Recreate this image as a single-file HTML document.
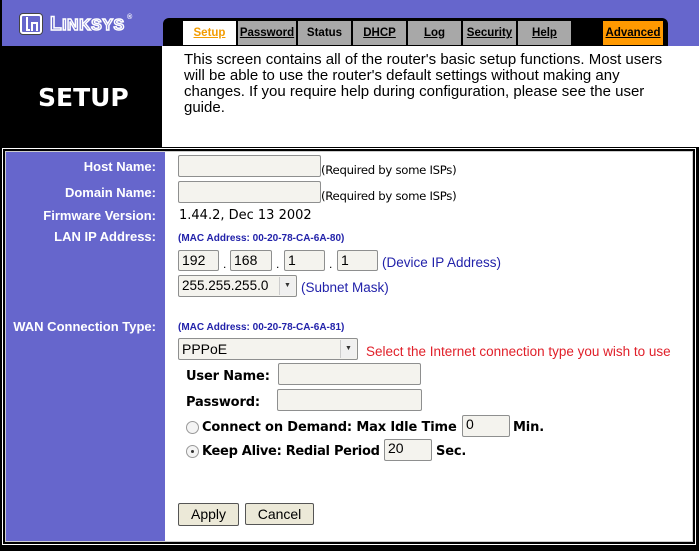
<!DOCTYPE html>
<html><head><style>
*{margin:0;padding:0;box-sizing:border-box}
body{width:699px;height:551px;background:#000;position:relative;overflow:hidden;font-family:"Liberation Sans",Arial,sans-serif}
.a{position:absolute}
.top{left:2px;top:0;width:697px;height:46px;background:#6666cc}
.tabbar{left:163px;top:18px;width:505px;height:30px;background:#000;border-radius:6px 6px 0 0}
.tab{position:absolute;top:21px;height:24px;background:#a8a8a8;font:bold 11.5px "Liberation Sans",Tahoma,sans-serif;color:#000;text-align:center;line-height:24px;text-decoration:underline}
.desc{left:162px;top:46px;width:537px;height:101px;background:#fff;font:15px "Liberation Sans",Tahoma,sans-serif;color:#000;padding:6px 0 0 22px;line-height:16px;white-space:nowrap}
.frame{left:2px;top:148px;width:694px;height:397px;border:1px solid #fff}
.inner{left:5px;top:151px;width:688px;height:391px;background:#fff;border:1px solid #ccc}
.left{left:6px;top:152px;width:159px;height:389px;background:#6666cc}
.lbl{position:absolute;right:543px;font:bold 13px "Liberation Sans",Arial,sans-serif;color:#fff;white-space:nowrap}
.inp{position:absolute;background:#f4f3ee;border:1px solid #8e8f8f;border-radius:2px;font:14px "Liberation Sans",Arial,sans-serif;padding:1px 3px}
.sm{font:11.7px "DejaVu Sans",Verdana,sans-serif;color:#000;letter-spacing:-0.3px}
.blue{color:#2222aa}
.b{font:bold 13px "DejaVu Sans",Verdana,sans-serif;color:#000;position:absolute;white-space:nowrap;letter-spacing:-0.15px}
.btn{position:absolute;background:#ece9d8;border:1px solid #555;border-radius:2px;font:14px "Liberation Sans",Arial,sans-serif;text-align:center;line-height:20px}
.dd{position:absolute;right:1px;top:1px;bottom:1px;width:16px;background:#f0f0f0;border-left:1px solid #ccc;font-size:7px;text-align:center;line-height:18px;color:#333}
.radio{position:absolute;width:13px;height:13px;border:1px solid #999;border-radius:50%;background:#f4f4f4}
</style></head><body>
<div class="a top"></div>
<div class="a" style="left:20px;top:14px;width:22px;height:20px;border:2px solid #fff;border-radius:3px;box-shadow:0 0 0 1px #444"></div>
<div class="a" style="left:26px;top:17px;width:4px;height:14px;border-left:2px solid #fff;border-bottom:2px solid #fff"></div>
<div class="a" style="left:31px;top:22px;width:7px;height:9px;border:2px solid #fff;border-bottom:none"></div>
<div class="a" style="left:50px;top:14px;font:bold 19px 'Liberation Sans',sans-serif;color:#6666cc;-webkit-text-stroke:1.5px #fff;letter-spacing:0.5px">L<span style="font-size:16px">INKSYS</span><span style="font-size:7px;vertical-align:top;-webkit-text-stroke:0;color:#fff"> ®</span></div>
<div class="a tabbar"></div>
<div class="tab" style="left:183px;width:53px;background:#fff;color:#f39c00">Setup</div>
<div class="tab" style="left:238px;width:58px">Password</div>
<div class="tab" style="left:298px;width:53px;text-decoration:none">Status</div>
<div class="tab" style="left:353px;width:53px">DHCP</div>
<div class="tab" style="left:408px;width:53px">Log</div>
<div class="tab" style="left:463px;width:53px">Security</div>
<div class="tab" style="left:518px;width:53px">Help</div>
<div class="tab" style="left:603px;width:60px;background:#ff9900">Advanced</div>
<div class="a" style="left:38px;top:83px;font:bold 25px 'DejaVu Sans',sans-serif;color:#fff">SETUP</div>
<div class="a desc">This screen contains all of the router's basic setup functions. Most users<br>will be able to use the router's default settings without making any<br>changes. If you require help during configuration, please see the user<br>guide.</div>
<div class="a frame"></div>
<div class="a inner"></div>
<div class="a left"></div>
<div class="lbl" style="top:159px">Host Name:</div>
<div class="lbl" style="top:185px">Domain Name:</div>
<div class="lbl" style="top:208px">Firmware Version:</div>
<div class="lbl" style="top:229px">LAN IP Address:</div>
<div class="lbl" style="top:319px">WAN Connection Type:</div>

<div class="inp" style="left:178px;top:155px;width:143px;height:22px"></div>
<div class="a sm" style="left:321px;top:163px">(Required by some ISPs)</div>
<div class="inp" style="left:178px;top:181px;width:143px;height:22px"></div>
<div class="a sm" style="left:321px;top:189px">(Required by some ISPs)</div>
<div class="a" style="left:179px;top:208px;font:13px 'DejaVu Sans',sans-serif">1.44.2, Dec 13 2002</div>
<div class="a blue" style="left:178px;top:233px;font:bold 10px 'Liberation Sans',sans-serif">(MAC Address: 00-20-78-CA-6A-80)</div>
<div class="inp" style="left:178px;top:250px;width:41px;height:21px">192</div>
<div class="a" style="left:223px;top:257px;font:12px sans-serif">.</div>
<div class="inp" style="left:230px;top:250px;width:42px;height:21px">168</div>
<div class="a" style="left:276px;top:257px;font:12px sans-serif">.</div>
<div class="inp" style="left:284px;top:250px;width:41px;height:21px">1</div>
<div class="a" style="left:329px;top:257px;font:12px sans-serif">.</div>
<div class="inp" style="left:337px;top:250px;width:41px;height:21px">1</div>
<div class="a blue" style="left:382px;top:255px;font:13.5px 'Liberation Sans',sans-serif">(Device IP Address)</div>
<div class="inp" style="left:178px;top:275px;width:119px;height:22px;padding-top:2px;font-size:13.5px">255.255.255.0<div class="dd">▼</div></div>
<div class="a blue" style="left:301px;top:280px;font:13.5px 'Liberation Sans',sans-serif">(Subnet Mask)</div>

<div class="a blue" style="left:178px;top:322px;font:bold 10px 'Liberation Sans',sans-serif">(MAC Address: 00-20-78-CA-6A-81)</div>
<div class="inp" style="left:178px;top:338px;width:180px;height:22px;padding-top:2px">PPPoE<div class="dd">▼</div></div>
<div class="a" style="left:366px;top:344px;font:13.5px 'Liberation Sans',sans-serif;color:#e0202a">Select the Internet connection type you wish to use</div>
<div class="b" style="left:186px;top:369px">User Name:</div>
<div class="inp" style="left:278px;top:363px;width:143px;height:22px"></div>
<div class="b" style="left:186px;top:395px">Password:</div>
<div class="inp" style="left:277px;top:389px;width:145px;height:22px"></div>
<div class="radio" style="left:186px;top:421px"></div>
<div class="b" style="left:202px;top:420px">Connect on Demand: Max Idle Time</div>
<div class="inp" style="left:462px;top:415px;width:48px;height:22px;padding-top:0">0</div>
<div class="b" style="left:513px;top:420px">Min.</div>
<div class="radio" style="left:186px;top:445px"><div style="position:absolute;left:4px;top:4px;width:3px;height:3px;border-radius:50%;background:#333"></div></div>
<div class="b" style="left:202px;top:444px;letter-spacing:-0.3px">Keep Alive: Redial Period</div>
<div class="inp" style="left:384px;top:439px;width:48px;height:22px;padding-top:0">20</div>
<div class="b" style="left:436px;top:444px">Sec.</div>
<div class="btn" style="left:178px;top:503px;width:61px;height:23px">Apply</div>
<div class="btn" style="left:245px;top:503px;width:69px;height:22px">Cancel</div>
</body></html>
